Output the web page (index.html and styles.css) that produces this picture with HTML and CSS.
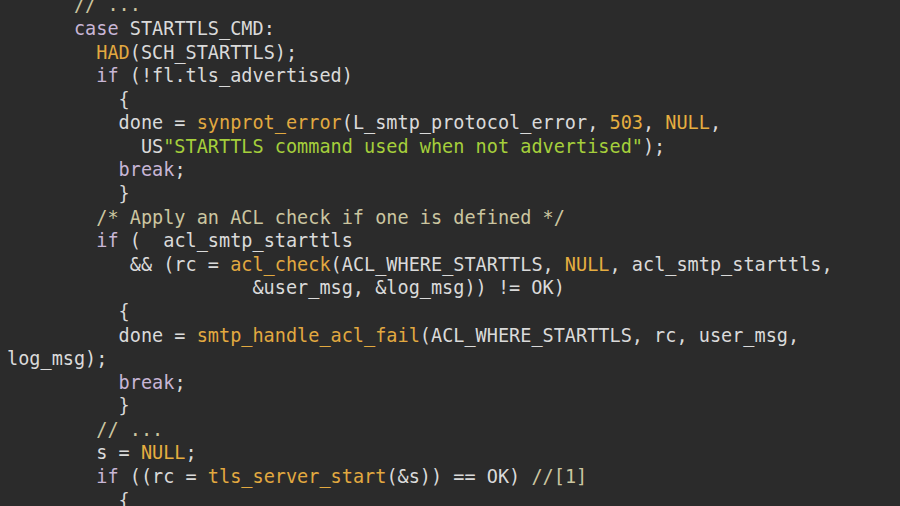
FILE: index.html
```html
<!DOCTYPE html>
<html>
<head>
<meta charset="utf-8">
<link rel="stylesheet" href="styles.css">
</head>
<body>
<pre class="code"><span class="cm">      // ...</span>
      <span class="kw">case</span> STARTTLS_CMD:
        <span class="fn">HAD</span>(SCH_STARTTLS);
        <span class="kw">if</span> (!fl.tls_advertised)
          {
          done = <span class="fn">synprot_error</span>(L_smtp_protocol_error, <span class="nu">503</span>, <span class="nu">NULL</span>,
            US<span class="st">"STARTTLS command used when not advertised"</span>);
          <span class="kw">break</span>;
          }
        <span class="cm">/* Apply an ACL check if one is defined */</span>
        <span class="kw">if</span> (  acl_smtp_starttls
           &amp;&amp; (rc = <span class="fn">acl_check</span>(ACL_WHERE_STARTTLS, <span class="nu">NULL</span>, acl_smtp_starttls,
                      &amp;user_msg, &amp;log_msg)) != OK)
          {
          done = <span class="fn">smtp_handle_acl_fail</span>(ACL_WHERE_STARTTLS, rc, user_msg,
log_msg);
          <span class="kw">break</span>;
          }
        <span class="cm">// ...</span>
        s = <span class="nu">NULL</span>;
        <span class="kw">if</span> ((rc = <span class="fn">tls_server_start</span>(&amp;s)) == OK) <span class="cm">//[1]</span>
          {
</pre>
</body>
</html>
```
FILE: styles.css
```css
html, body {
  margin: 0;
  padding: 0;
  background: #2b2b2b;
  overflow: hidden;
}
.code {
  margin: -6.6px 0 0 0;
  padding: 0 0 0 7px;
  font-family: "DejaVu Sans Mono", monospace;
  font-size: 18.55px;
  line-height: 23.58px;
  color: #dadada;
  white-space: pre;
}
.kw { color: #c8b6d6; }
.fn { color: #e2a940; }
.nu { color: #e6ae40; }
.st { color: #a5cf3b; }
.cm { color: #cbc6a0; }
```
